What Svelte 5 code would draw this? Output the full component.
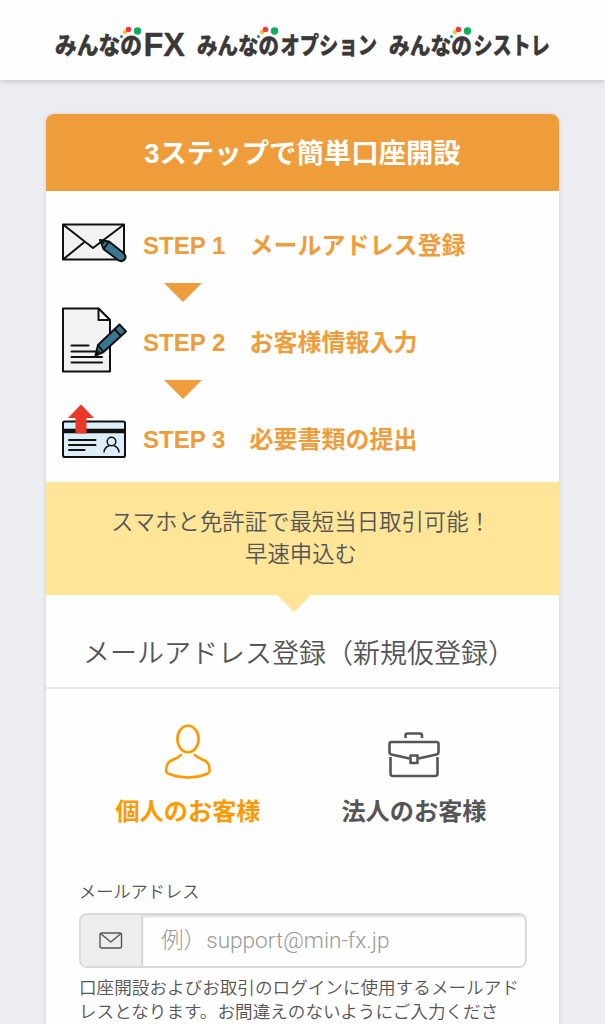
<script lang="ts">
  interface Logo {
    name: string;
    width: number;
    kana: number; // 「みんなの」の幅
    size: number;
    tail: string;
    tailSize: number;
    latin?: boolean;
  }

  const logos: Logo[] = [
    { name: 'fx', width: 130, kana: 87, size: 23.5, tail: 'FX', tailSize: 34, latin: true },
    { name: 'option', width: 180, kana: 82, size: 22.5, tail: 'オプション', tailSize: 24 },
    { name: 'systre', width: 161, kana: 83, size: 22.5, tail: 'シストレ', tailSize: 24 },
  ];

  const steps = [
    { icon: 'mail', no: 'STEP 1', label: 'メールアドレス登録' },
    { icon: 'form', no: 'STEP 2', label: 'お客様情報入力' },
    { icon: 'card', no: 'STEP 3', label: '必要書類の提出' },
  ];

  let customer = $state('personal');
  let email = $state('');
</script>

<div class="page">
  <header>
    {#each logos as l (l.name)}
      <svg class="logo" width={l.width} height="34" viewBox="0 0 {l.width} 34">
        <text x="0" y="29" font-size={l.size} textLength={l.kana} lengthAdjust="spacingAndGlyphs">みんなの</text>
        <text
          class:latin={l.latin}
          x={l.kana + 1.5}
          y={l.latin ? 30.5 : 29}
          font-size={l.tailSize}
          textLength={l.width - l.kana - 1.5}
          lengthAdjust="spacingAndGlyphs">{l.tail}</text>
        <circle cx={l.kana - 20.5} cy="11.5" r="1.5" fill="#1479c4" />
        <circle cx={l.kana - 17} cy="7" r="2.2" fill="#fbc02d" />
        <circle cx={l.kana - 13.5} cy="4.5" r="2.8" fill="#f23645" />
        <circle cx={l.kana - 4.5} cy="6" r="3.7" fill="#0cae5b" />
      </svg>
    {/each}
  </header>

  <main>
    <h1>3ステップで簡単口座開設</h1>

    <ol class="steps">
      {#each steps as s, i (s.no)}
        {#if i > 0}<li class="arrow" aria-hidden="true"></li>{/if}
        <li class="step">
          {#if s.icon === 'mail'}
            <svg width="66" height="66" viewBox="0 0 66 66" stroke="#111" stroke-width="2" stroke-linejoin="round">
              <rect x="2" y="12.5" width="61" height="35" fill="#f2f2f2" />
              <path d="M2 12.5 32 36 63 12.5M2 47.5 23.5 30M63 47.5 43 30.5" fill="none" />
              <path d="M39 28 48 29.5 62.5 41Q66 44.5 63.5 47.5 60.5 50.5 57 48L42.5 37Z" fill="#397690" />
              <path d="M48 29.5 42.5 37M39 28 43 31.5" fill="none" />
            </svg>
          {:else if s.icon === 'form'}
            <svg width="66" height="66" viewBox="0 2 66 66" stroke="#111" stroke-width="2" stroke-linejoin="round">
              <path d="M2 1.5H37.5L49 13V64.5H2Z" fill="#f2f2f2" />
              <path d="M37.5 1.5V13H49Z" fill="#fff" />
              <path d="M10.5 38.5H27.5M10.5 44.5H40M10.5 50H41M10.5 55.5H41" fill="none" stroke-linecap="round" />
              <path d="M34.5 48.5 37 38 58.5 17.5 65 24.5 42.5 45Z" fill="#397690" />
              <path d="M53.5 22 60 29M37 38 42.5 45M34.5 48.5 38 44" fill="none" />
            </svg>
          {:else}
            <svg width="66" height="66" viewBox="0 -1 66 66" stroke="#111" stroke-width="2" stroke-linejoin="round">
              <rect x="2" y="14.5" width="62" height="35.5" rx="1.8" fill="#dceefa" />
              <path d="M2 24H64" stroke-width="4.5" />
              <path d="M8 33H34.5M8 38H34.5M8 43H23.5" stroke-linecap="round" />
              <g fill="none" stroke-width="1.5">
                <circle cx="50.5" cy="34.5" r="4.3" />
                <path d="M43 45.5C43 41 45.5 39.5 48.5 38.5M52.5 38.5C55.5 39.5 58 41 58 45.5" />
              </g>
              <path d="M20-2.5 33 11H25.5V26.5H14.5V11H7Z" fill="#ea3829" stroke="none" />
            </svg>
          {/if}
          <span class="no">{s.no}</span>
          <span class="label">{s.label}</span>
        </li>
      {/each}
    </ol>

    <p class="lead">スマホと免許証で最短当日取引可能！<br />早速申込む</p>

    <h2>メールアドレス登録（新規仮登録）</h2>

    <div class="types">
      <button class:active={customer === 'personal'} onclick={() => (customer = 'personal')}>
        <svg width="48" height="56" viewBox="0 0 48 56" fill="none" stroke="currentColor" stroke-width="2.6" stroke-linecap="round">
          <ellipse cx="24" cy="15" rx="10.6" ry="13.2" />
          <path d="M17 31C14.5 34 10 35 6.5 37 3 39 2 43.5 2.2 47 2.2 49 4 49.5 6 50.3 17 54.5 31 54.5 42 50.3 44 49.5 45.5 49 45.5 47 45.7 43.5 45 39 41.5 37 38 35 33.5 34 31 31" />
        </svg>
        <span>個人のお客様</span>
      </button>
      <button class:active={customer === 'corporate'} onclick={() => (customer = 'corporate')}>
        <svg width="54" height="56" viewBox="0 0 54 56" fill="none" stroke="currentColor" stroke-width="2.6" stroke-linejoin="round">
          <path d="M18.5 14V11.5Q18.5 9.5 20.5 9.5H33Q35 9.5 35 11.5V14" />
          <path d="M22.5 34.5 4.5 30.5Q2.5 30 2.5 28V20Q2.5 18 4.5 18H49.5Q51.5 18 51.5 20V28Q51.5 30 49.5 30.5L31.5 34.5" />
          <rect x="23.5" y="31.5" width="7" height="7.5" />
          <path d="M3.5 33V49.5Q3.5 52 6 52H48Q50.5 52 50.5 49.5V33" />
        </svg>
        <span>法人のお客様</span>
      </button>
    </div>

    <form>
      <label for="email">メールアドレス</label>
      <div class="field">
        <span class="addon">
          <svg width="24" height="17" viewBox="0 0 24 17" fill="none" stroke="#555" stroke-width="1.4" stroke-linejoin="round">
            <rect x="1" y="1" width="21.5" height="15" rx="1.5" />
            <path d="M1.5 1.5 11.8 10 22 1.5" />
          </svg>
        </span>
        <input id="email" type="email" placeholder="例）support@min-fx.jp" bind:value={email} />
      </div>
      <p class="help">口座開設およびお取引のログインに使用するメールアドレスとなります。お間違えのないようにご入力くださ</p>
    </form>
  </main>
</div>

<style>
  :global(body) { margin: 0; }
  .page {
    height: 1024px; overflow: hidden; background: #ebedf1; color: #555;
    font-family: 'Liberation Sans', 'Noto Sans CJK JP', sans-serif;
  }
  header {
    display: flex; gap: 12px; box-sizing: border-box; height: 80px; padding: 25px 0 0 55px;
    background: #fefefe; box-shadow: 0 1px 5px rgba(60, 65, 80, 0.25);
  }
  .logo { flex: none; overflow: visible; }
  .logo text {
    font-family: 'Noto Sans CJK JP', sans-serif; font-weight: 900;
    fill: #3b3838; stroke: #3b3838; stroke-width: 0.3;
  }
  .logo .latin { font-family: 'Liberation Sans', sans-serif; }

  main {
    width: 513px; height: 1000px; margin: 34px 0 0 46px; overflow: hidden;
    border-radius: 8px 8px 0 0; background: #fefefe; box-shadow: 0 1px 4px rgba(90, 100, 120, 0.22);
  }
  h1 {
    margin: 0; height: 77px; line-height: 79px; text-align: center;
    background: #ee9d3a; color: #fff; font-size: 27.4px; font-weight: 700;
  }
  .steps { list-style: none; margin: 0; padding: 18px 0 7px 15px; }
  .step {
    display: flex; align-items: center; height: 72px;
    color: #ee9d3a; font-size: 24px; font-weight: 700; white-space: nowrap;
  }
  .step svg { flex: none; overflow: visible; }
  .no { width: 106.5px; margin-left: 16px; padding-top: 2px; }
  .label { padding-bottom: 3px; }
  .arrow {
    width: 38px; height: 19px; margin: 2px 0 4px 103px;
    background: #ee9d3a; clip-path: polygon(0 0, 100% 0, 50% 100%);
  }

  .lead {
    position: relative; box-sizing: border-box; height: 113px; margin: 0; padding: 25px 3px 0 0;
    background: #fee598; text-align: center; font-size: 22.4px; font-weight: 350; line-height: 32px;
  }
  .lead::after {
    content: ''; position: absolute; left: 230px; top: 112px; width: 36px; height: 18px;
    background: #fee598; clip-path: polygon(0 0, 100% 0, 50% 100%);
  }
  h2 {
    margin: 0; height: 92px; padding-left: 37px; border-bottom: 2px solid #e6eaf0;
    font-size: 27px; font-weight: 350; line-height: 118px; white-space: nowrap;
  }

  .types { display: flex; gap: 56px; padding: 35px 0 0 57px; }
  .types button {
    display: flex; flex-direction: column; align-items: center; width: 170px; padding: 0;
    border: 0; background: none; color: #555; font: inherit; font-size: 24.2px; font-weight: 700; cursor: pointer;
  }
  .types svg { flex: none; }
  .types span { margin-top: 14px; line-height: 36px; white-space: nowrap; }
  .types .active { color: #ff9900; }

  form { padding: 50px 33px 0; font-weight: 350; }
  label { display: block; font-size: 17.2px; line-height: 24px; }
  .field {
    display: flex; box-sizing: border-box; width: 448px; height: 55px; margin-top: 9px; overflow: hidden;
    border: 2px solid #d8d8d8; border-radius: 8px;
  }
  .addon {
    display: flex; align-items: center; justify-content: center; flex: none;
    width: 60px; border-right: 2px solid #d8d8d8; background: #ededed;
  }
  input {
    flex: 1; min-width: 0; padding: 0 18px; border: 0; outline: 0; background: #fefefe;
    box-shadow: inset 0 2px 2px #ddd; color: #555;
    font: 300 22.6px Roboto, 'Noto Sans CJK JP', sans-serif;
  }
  input::placeholder { color: #999; }
  .help { width: 442px; margin: 8px 0 0; font-size: 17.6px; line-height: 24px; line-break: anywhere; }
</style>
